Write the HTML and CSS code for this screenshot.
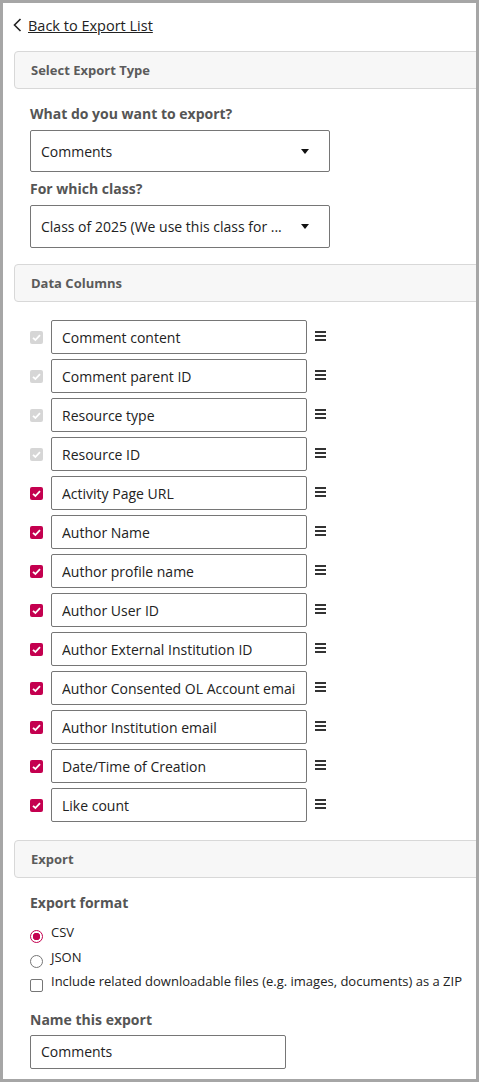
FILE: index.html
```html
<!DOCTYPE html>
<html>
    <head>
        <title>Export</title>
        <meta charset="UTF-8">
        <link rel="stylesheet" href="styles.css">
    </head>
    <body>
        <div class="frame">

            <a class="backLink" href="#">
                <svg class="chevron" width="9" height="14" viewBox="0 0 9 14"><path d="M7.5 1 L1.5 7 L7.5 13" fill="none" stroke="#222" stroke-width="1.6"/></svg>
                <span>Back to Export List</span>
            </a>

            <div class="panelHead">Select Export Type</div>
            <div class="panelBody">
                <div class="fieldLabel">What do you want to export?</div>
                <div class="fakeSelect">
                    <span class="selText">Comments</span>
                    <span class="caret"></span>
                </div>
                <div class="fieldLabel second">For which class?</div>
                <div class="fakeSelect tall">
                    <span class="selText">Class of 2025 (We use this class for ...</span>
                    <span class="caret"></span>
                </div>
            </div>

            <div class="panelHead">Data Columns</div>
            <div class="panelBody columns">
                <div class="colRow"><span class="box locked"><svg width="13" height="13" viewBox="0 0 13 13"><path d="M3 6.8 L5.4 9 L10 4.2" fill="none" stroke="#fff" stroke-width="1.8"/></svg></span><input class="colInput" value="Comment content"><span class="drag"></span></div>
                <div class="colRow"><span class="box locked"><svg width="13" height="13" viewBox="0 0 13 13"><path d="M3 6.8 L5.4 9 L10 4.2" fill="none" stroke="#fff" stroke-width="1.8"/></svg></span><input class="colInput" value="Comment parent ID"><span class="drag"></span></div>
                <div class="colRow"><span class="box locked"><svg width="13" height="13" viewBox="0 0 13 13"><path d="M3 6.8 L5.4 9 L10 4.2" fill="none" stroke="#fff" stroke-width="1.8"/></svg></span><input class="colInput" value="Resource type"><span class="drag"></span></div>
                <div class="colRow"><span class="box locked"><svg width="13" height="13" viewBox="0 0 13 13"><path d="M3 6.8 L5.4 9 L10 4.2" fill="none" stroke="#fff" stroke-width="1.8"/></svg></span><input class="colInput" value="Resource ID"><span class="drag"></span></div>
                <div class="colRow"><span class="box on"><svg width="13" height="13" viewBox="0 0 13 13"><path d="M3 6.8 L5.4 9 L10 4.2" fill="none" stroke="#fff" stroke-width="1.8"/></svg></span><input class="colInput" value="Activity Page URL"><span class="drag"></span></div>
                <div class="colRow"><span class="box on"><svg width="13" height="13" viewBox="0 0 13 13"><path d="M3 6.8 L5.4 9 L10 4.2" fill="none" stroke="#fff" stroke-width="1.8"/></svg></span><input class="colInput" value="Author Name"><span class="drag"></span></div>
                <div class="colRow"><span class="box on"><svg width="13" height="13" viewBox="0 0 13 13"><path d="M3 6.8 L5.4 9 L10 4.2" fill="none" stroke="#fff" stroke-width="1.8"/></svg></span><input class="colInput" value="Author profile name"><span class="drag"></span></div>
                <div class="colRow"><span class="box on"><svg width="13" height="13" viewBox="0 0 13 13"><path d="M3 6.8 L5.4 9 L10 4.2" fill="none" stroke="#fff" stroke-width="1.8"/></svg></span><input class="colInput" value="Author User ID"><span class="drag"></span></div>
                <div class="colRow"><span class="box on"><svg width="13" height="13" viewBox="0 0 13 13"><path d="M3 6.8 L5.4 9 L10 4.2" fill="none" stroke="#fff" stroke-width="1.8"/></svg></span><input class="colInput" value="Author External Institution ID"><span class="drag"></span></div>
                <div class="colRow"><span class="box on"><svg width="13" height="13" viewBox="0 0 13 13"><path d="M3 6.8 L5.4 9 L10 4.2" fill="none" stroke="#fff" stroke-width="1.8"/></svg></span><input class="colInput" value="Author Consented OL Account email"><span class="drag"></span></div>
                <div class="colRow"><span class="box on"><svg width="13" height="13" viewBox="0 0 13 13"><path d="M3 6.8 L5.4 9 L10 4.2" fill="none" stroke="#fff" stroke-width="1.8"/></svg></span><input class="colInput" value="Author Institution email"><span class="drag"></span></div>
                <div class="colRow"><span class="box on"><svg width="13" height="13" viewBox="0 0 13 13"><path d="M3 6.8 L5.4 9 L10 4.2" fill="none" stroke="#fff" stroke-width="1.8"/></svg></span><input class="colInput" value="Date/Time of Creation"><span class="drag"></span></div>
                <div class="colRow"><span class="box on"><svg width="13" height="13" viewBox="0 0 13 13"><path d="M3 6.8 L5.4 9 L10 4.2" fill="none" stroke="#fff" stroke-width="1.8"/></svg></span><input class="colInput" value="Like count"><span class="drag"></span></div>
            </div>

            <div class="panelHead">Export</div>
            <div class="panelBody">
                <div class="fieldLabel">Export format</div>
                <div class="optRow first"><span class="radio picked"></span><span class="optText">CSV</span></div>
                <div class="optRow"><span class="radio"></span><span class="optText">JSON</span></div>
                <div class="optRow"><span class="box empty"></span><span class="optText">Include related downloadable files (e.g. images, documents) as a ZIP</span></div>
                <div class="fieldLabel nameLabel">Name this export</div>
                <input class="nameInput" value="Comments">
            </div>

        </div>
    </body>
</html>
```

FILE: styles.css
```css
body
{
	margin:0px;
	padding:0px;
	background-color:#a6a6a6;
	font-family:"Open Sans", "Liberation Sans", sans-serif;
	color:#222;
}

.frame
{
	width:479px;
	height:1082px;
	box-sizing:border-box;
	border:3px solid #a6a6a6;
	background-color:white;
	overflow:hidden;
}

.backLink
{
	display:flex;
	align-items:center;
	gap:6px;
	margin:12px 0 0 10px;
	height:20px;
	font-size:14.5px;
	color:#222;
	text-decoration:underline;
}

.chevron
{
	flex:none;
}

.panelHead
{
	margin:16px -40px 0 11px;
	height:38px;
	box-sizing:border-box;
	border:1px solid #d8d8d8;
	border-radius:4px;
	background-color:#f7f7f7;
	padding-left:16px;
	display:flex;
	align-items:center;
	font-size:13px;
	font-weight:bold;
	color:#5b5b5b;
}

.panelBody
{
	padding-left:27px;
}

.fieldLabel
{
	margin-top:15px;
	font-size:14px;
	line-height:20px;
	font-weight:bold;
	color:#555;
}

.fieldLabel.second
{
	margin-top:7px;
}

.fakeSelect
{
	margin-top:6px;
	width:300px;
	height:42px;
	box-sizing:border-box;
	border:1px solid #767676;
	border-radius:2px;
	display:flex;
	align-items:center;
	padding:0 20px 0 10px;
	font-size:14px;
	color:#222;
}

.fakeSelect.tall
{
	height:43px;
}

.selText
{
	flex:1;
	white-space:nowrap;
	overflow:hidden;
}

.caret
{
	flex:none;
	width:0;
	height:0;
	border-left:4.5px solid transparent;
	border-right:4.5px solid transparent;
	border-top:5px solid #111;
	margin-left:10px;
}

.columns
{
	padding-top:18px;
	padding-bottom:2px;
	display:flex;
	flex-direction:column;
	gap:5px;
}

.colRow
{
	display:flex;
	align-items:center;
	height:34px;
}

.box
{
	flex:none;
	width:13px;
	height:13px;
	box-sizing:border-box;
	border-radius:2px;
	display:flex;
}

.box.locked
{
	background-color:#d6d6d6;
}

.box.on
{
	background-color:#c4004f;
}

.box.empty
{
	border:1px solid #767676;
	background-color:white;
}

.colInput
{
	margin-left:8px;
	width:256px;
	height:34px;
	box-sizing:border-box;
	border:1px solid #767676;
	border-radius:2px;
	padding:0 10px;
	font-family:"Open Sans", "Liberation Sans", sans-serif;
	font-size:14px;
	color:#222;
	background-color:white;
}

.drag
{
	margin:-3px 0 0 8px;
	width:11px;
	height:10px;
	background:linear-gradient(#333 0 2px, transparent 2px 4px, #333 4px 6px, transparent 6px 8px, #333 8px 10px);
}

.optRow
{
	display:flex;
	align-items:flex-start;
	height:24.5px;
	font-size:13px;
	line-height:18px;
}

.optRow.first
{
	margin-top:10px;
}

.optRow .radio, .optRow .box
{
	margin-top:7px;
	margin-right:8px;
}

.radio
{
	flex:none;
	width:13px;
	height:13px;
	box-sizing:border-box;
	border-radius:50%;
	border:1px solid #767676;
	background-color:white;
}

.radio.picked
{
	border:1.5px solid #c4004f;
	background:radial-gradient(circle, #c4004f 0 3.5px, white 4px);
}

.optText
{
	color:#222;
}

.nameLabel
{
	margin-top:13px;
}

.nameInput
{
	margin-top:5px;
	width:256px;
	height:34px;
	box-sizing:border-box;
	border:1px solid #767676;
	border-radius:2px;
	padding:0 10px;
	font-family:"Open Sans", "Liberation Sans", sans-serif;
	font-size:14px;
	color:#222;
}
```
